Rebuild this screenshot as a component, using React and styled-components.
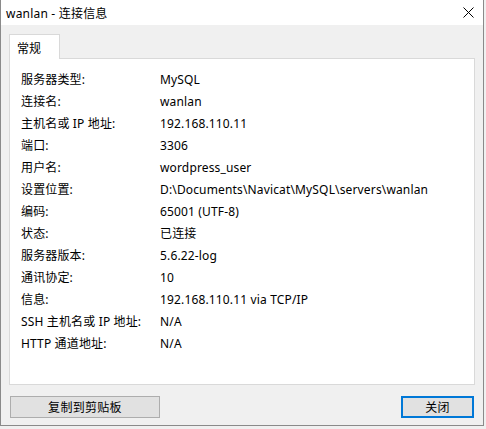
import React from "react";
import styled, { createGlobalStyle } from "styled-components";

const GlobalStyle = createGlobalStyle`
  html, body { margin: 0; padding: 0; background: #f0f0f0; }
  body { font-family: "Noto Sans", "Noto Sans CJK SC", sans-serif; }
`;

const Window = styled.div`
  box-sizing: border-box;
  width: 484px;
  height: 426px;
  border: 1px solid #8a8a8a;
  border-top: none;
  background: #f0f0f0;
  display: flex;
  flex-direction: column;
  color: #000;
  font-size: 12px;
`;

const TitleBar = styled.div`
  height: 25px;
  background: #fff;
  display: flex;
  align-items: center;
  justify-content: space-between;
  padding: 0 9px 0 5px;
  flex: none;
`;

const Title = styled.span`
  font-size: 12px;
  letter-spacing: 0.2px;
`;

const Body = styled.div`
  flex: 1;
  display: flex;
  flex-direction: column;
  padding: 9px 8px 7px 8px;
`;

const TabStrip = styled.div`
  display: flex;
  position: relative;
  z-index: 1;
  margin-bottom: -1px;
`;

const Tab = styled.div`
  box-sizing: border-box;
  width: 51px;
  height: 25px;
  padding: 4px 0 0 7px;
  background: #fff;
  border: 1px solid #d9d9d9;
  border-bottom: none;
`;

const Panel = styled.div`
  box-sizing: border-box;
  height: 327px;
  width: 466px;
  background: #fff;
  border: 1px solid #d9d9d9;
  padding: 9px 0 0 11px;
  display: grid;
  grid-template-columns: 139px 1fr;
  grid-auto-rows: 22px;
  align-content: start;
`;

const Cell = styled.div`
  display: flex;
  align-items: center;
  white-space: nowrap;
  letter-spacing: 0.15px;
`;

const Footer = styled.div`
  display: flex;
  justify-content: space-between;
  margin-top: 11px;
  padding: 0 1px 0 1px;
`;

const Button = styled.button`
  box-sizing: border-box;
  height: 22px;
  width: ${(p) => p.$w}px;
  background: #e1e1e1;
  border: ${(p) => (p.$focused ? "2px solid #0078d7" : "1px solid #adadad")};
  font-family: inherit;
  font-size: 12px;
  color: #000;
  padding: 0;
  letter-spacing: 0.3px;
`;

const rows = [
  ["服务器类型:", "MySQL"],
  ["连接名:", "wanlan"],
  ["主机名或 IP 地址:", "192.168.110.11"],
  ["端口:", "3306"],
  ["用户名:", "wordpress_user"],
  ["设置位置:", "D:\\Documents\\Navicat\\MySQL\\servers\\wanlan"],
  ["编码:", "65001 (UTF-8)"],
  ["状态:", "已连接"],
  ["服务器版本:", "5.6.22-log"],
  ["通讯协定:", "10"],
  ["信息:", "192.168.110.11 via TCP/IP"],
  ["SSH 主机名或 IP 地址:", "N/A"],
  ["HTTP 通道地址:", "N/A"],
];

export default function App() {
  return (
    <>
      <GlobalStyle />
      <Window>
        <TitleBar>
          <Title>wanlan - 连接信息</Title>
          <svg width="11" height="11" viewBox="0 0 11 11">
            <path d="M0.5 0.5 L10.5 10.5 M10.5 0.5 L0.5 10.5" stroke="#000" strokeWidth="1" />
          </svg>
        </TitleBar>
        <Body>
          <TabStrip>
            <Tab>常规</Tab>
          </TabStrip>
          <Panel>
            {rows.map(([k, v]) => (
              <React.Fragment key={k}>
                <Cell>{k}</Cell>
                <Cell>{v}</Cell>
              </React.Fragment>
            ))}
          </Panel>
          <Footer>
            <Button $w={150}>复制到剪贴板</Button>
            <Button $w={73} $focused>关闭</Button>
          </Footer>
        </Body>
      </Window>
    </>
  );
}
